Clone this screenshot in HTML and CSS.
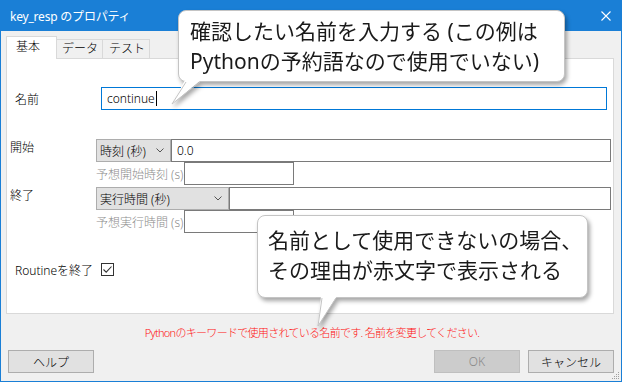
FILE: index.html
```html
<!DOCTYPE html>
<html lang="ja">
<head>
<meta charset="utf-8">
<title>key_resp のプロパティ</title>
<link rel="stylesheet" href="styles.css">
</head>
<body>
<div class="window">
  <div class="titlebar">
    <span class="title">key_resp のプロパティ</span>
    <svg class="close" width="10" height="10" viewBox="0 0 10 10"><path d="M0.5 0.5 L9.5 9.5 M9.5 0.5 L0.5 9.5" stroke="#fff" stroke-width="1.1" fill="none"/></svg>
  </div>
  <div class="tabs">
    <div class="tab active">基本</div>
    <div class="tab t-data">データ</div>
    <div class="tab t-test">テスト</div>
  </div>
  <div class="panel">
    <div class="name-row">
      <div class="lbl">名前</div>
      <div class="input focus name-input">continue<span class="caret"></span></div>
    </div>
    <div class="block start">
      <div class="lbl">開始</div>
      <div class="col">
        <div class="line">
          <div class="select s-start"><span>時刻 (秒)</span><svg class="chev" width="8" height="5" viewBox="0 0 8 5"><path d="M0.5 0.5 L4 4 L7.5 0.5" stroke="#555" fill="none"/></svg></div>
          <div class="input start-input">0.0</div>
        </div>
        <div class="line">
          <div class="hint">予想開始時刻 (s)</div>
          <div class="input small"></div>
        </div>
      </div>
    </div>
    <div class="block end">
      <div class="lbl">終了</div>
      <div class="col">
        <div class="line">
          <div class="select s-end"><span>実行時間 (秒)</span><svg class="chev" width="8" height="5" viewBox="0 0 8 5"><path d="M0.5 0.5 L4 4 L7.5 0.5" stroke="#555" fill="none"/></svg></div>
          <div class="input end-input"></div>
        </div>
        <div class="line">
          <div class="hint">予想実行時間 (s)</div>
          <div class="input small"></div>
        </div>
      </div>
    </div>
    <div class="routine-row">
      <div class="lbl">Routineを終了</div>
      <div class="checkbox"><svg width="11" height="11" viewBox="0 0 11 11"><path d="M1.5 5.5 L4.2 8.2 L9.5 2.5" stroke="#333" stroke-width="1.1" fill="none"/></svg></div>
    </div>
  </div>
  <div class="error"><span class="err">Pythonのキーワードで使用されている名前です. 名前を変更してください.</span></div>
  <div class="buttons">
    <div class="btn">ヘルプ</div>
    <div class="spacer"></div>
    <div class="btn disabled">OK</div>
    <div class="btn">キャンセル</div>
  </div>
  <svg class="grip" width="8" height="8" viewBox="0 0 8 8" fill="#a0a0a0">
    <rect x="6" y="0" width="1" height="1"/>
    <rect x="4" y="2" width="1" height="1"/><rect x="6" y="2" width="1" height="1"/>
    <rect x="2" y="4" width="1" height="1"/><rect x="4" y="4" width="1" height="1"/><rect x="6" y="4" width="1" height="1"/>
    <rect x="0" y="6" width="1" height="1"/><rect x="2" y="6" width="1" height="1"/><rect x="4" y="6" width="1" height="1"/><rect x="6" y="6" width="1" height="1"/>
  </svg>
</div>

<div class="callout c1">
  <div class="ctext">確認したい名前を入力する (この例は<br>Pythonの予約語なので使用でいない)</div>
  <svg class="tail tail1" width="36" height="28" viewBox="0 0 36 28">
    <polygon points="17,1 33,1 4,25" fill="#fff"/>
    <polyline points="18,3 4,25 32,3" fill="none" stroke="#c4c4c4" stroke-width="1"/>
  </svg>
</div>

<div class="callout c2">
  <div class="ctext">名前として使用できないの場合、<br>その理由が赤文字で表示される</div>
  <svg class="tail tail2" width="30" height="34" viewBox="0 0 30 34">
    <polygon points="9,1 25,1 6,31" fill="#fff"/>
    <polyline points="10,3 6,31 24,3" fill="none" stroke="#c4c4c4" stroke-width="1"/>
  </svg>
</div>
</body>
</html>
```

FILE: styles.css
```css
html, body {
  margin: 0;
  padding: 0;
}
body {
  width: 622px;
  height: 382px;
  overflow: hidden;
  font-family: "Noto Sans", "Noto Sans CJK JP", sans-serif;
  font-size: 12px;
  color: #000;
  background: #f0f0f0;
}
.window {
  position: relative;
  width: 622px;
  height: 382px;
  box-sizing: border-box;
  border: 1px solid #1a7fd6;
  background: #f0f0f0;
  display: flex;
  flex-direction: column;
  font-weight: 300;
}
.titlebar {
  height: 30px;
  flex: none;
  background: #1a7fd6;
  display: flex;
  align-items: center;
  color: #fff;
}
.title {
  margin-left: 9px;
  font-size: 12px;
  letter-spacing: -0.2px;
  font-weight: 400;
}
.close {
  margin-left: auto;
  margin-right: 10px;
  display: block;
}
.tabs {
  height: 22px;
  flex: none;
  margin-top: 5px;
  margin-left: 5px;
  display: flex;
  align-items: flex-end;
  position: relative;
  z-index: 1;
}
.tab {
  box-sizing: border-box;
  height: 19px;
  line-height: 18px;
  border-top: 1px solid #d9d9d9;
  border-right: 1px solid #d9d9d9;
  background: #f0f0f0;
  color: #000;
}
.tab.active {
  width: 51px;
  height: 23px;
  margin-bottom: -1px;
  line-height: 20px;
  padding-left: 9px;
  background: #fff;
  border-left: 1px solid #d9d9d9;
}
.t-data {
  width: 46px;
  padding-left: 5px;
}
.t-test {
  width: 47px;
  padding-left: 6px;
}
.panel {
  flex: none;
  width: 608px;
  height: 256px;
  box-sizing: border-box;
  margin-left: 5px;
  background: #fff;
  border: 1px solid #d9d9d9;
  display: flex;
  flex-direction: column;
}
.lbl {
  width: 86px;
  flex: none;
  white-space: nowrap;
}
.name-row {
  margin-top: 28px;
  padding-left: 8px;
  display: flex;
  align-items: center;
  height: 23px;
}
.input {
  box-sizing: border-box;
  height: 23px;
  border: 1px solid #7a7a7a;
  background: #fff;
  padding: 0 5px;
  display: flex;
  align-items: center;
  flex: none;
}
.input.focus {
  border-color: #0078d7;
}
.name-input {
  width: 506px;
}
.caret {
  display: inline-block;
  width: 1px;
  height: 15px;
  background: #000;
  margin-left: 1px;
}
.block {
  display: flex;
  align-items: flex-start;
  padding-left: 3px;
}
.block .lbl {
  line-height: 18px;
}
.start {
  margin-top: 29px;
}
.end {
  margin-top: 2px;
}
.col {
  display: flex;
  flex-direction: column;
}
.line {
  display: flex;
  align-items: center;
  height: 23px;
}
.select {
  box-sizing: border-box;
  height: 23px;
  border: 1px solid #adadad;
  background: #e1e1e1;
  padding: 0 6px 0 3px;
  display: flex;
  align-items: center;
  justify-content: space-between;
  flex: none;
}
.chev {
  display: block;
}
.s-start {
  width: 75px;
}
.s-end {
  width: 133px;
}
.start-input {
  width: 440px;
}
.end-input {
  width: 382px;
}
.hint {
  width: 88px;
  flex: none;
  color: #8c8c8c;
  white-space: nowrap;
}
.small {
  width: 110px;
}
.routine-row {
  margin-top: 30px;
  padding-left: 8px;
  display: flex;
  align-items: center;
  height: 13px;
}
.checkbox {
  box-sizing: border-box;
  width: 13px;
  height: 13px;
  border: 1px solid #333;
  background: #fff;
  display: flex;
  align-items: center;
  justify-content: center;
}
.checkbox svg {
  display: block;
}
.error {
  height: 36px;
  flex: none;
  display: flex;
  align-items: center;
  justify-content: center;
}
.err {
  color: #ff1010;
  font-size: 11px;
  letter-spacing: -0.7px;
  margin-left: 2px;
}
.buttons {
  height: 23px;
  flex: none;
  display: flex;
  gap: 8px;
  padding: 0 7px 0 7px;
}
.spacer {
  flex: 1;
}
.btn {
  box-sizing: border-box;
  width: 86px;
  height: 23px;
  border: 1px solid #adadad;
  background: #e1e1e1;
  display: flex;
  align-items: center;
  justify-content: center;
}
.btn.disabled {
  background: #cccccc;
  border-color: #bfbfbf;
  color: #8a8a8a;
}
.grip {
  position: absolute;
  right: 1px;
  bottom: 1px;
  display: block;
}
.callout {
  position: absolute;
  box-sizing: border-box;
  background: #fff;
  border: 1px solid #c4c4c4;
  border-radius: 8px;
  filter: drop-shadow(2px 3px 2px rgba(0, 0, 0, 0.35));
  color: #1a1a1a;
  font-family: "Noto Sans", "Noto Sans CJK JP", sans-serif;
  font-size: 21px;
  line-height: 30px;
  white-space: nowrap;
  z-index: 5;
}
.c1 {
  left: 178px;
  top: 10px;
  width: 387px;
  height: 72px;
  padding: 5px 0 0 11px;
}
.c2 {
  left: 257px;
  top: 215px;
  width: 331px;
  height: 83px;
  padding: 9px 0 0 10px;
}
.tail {
  position: absolute;
  display: block;
}
.tail1 {
  left: -11px;
  top: 68px;
}
.tail2 {
  left: 54px;
  top: 79px;
}
```
